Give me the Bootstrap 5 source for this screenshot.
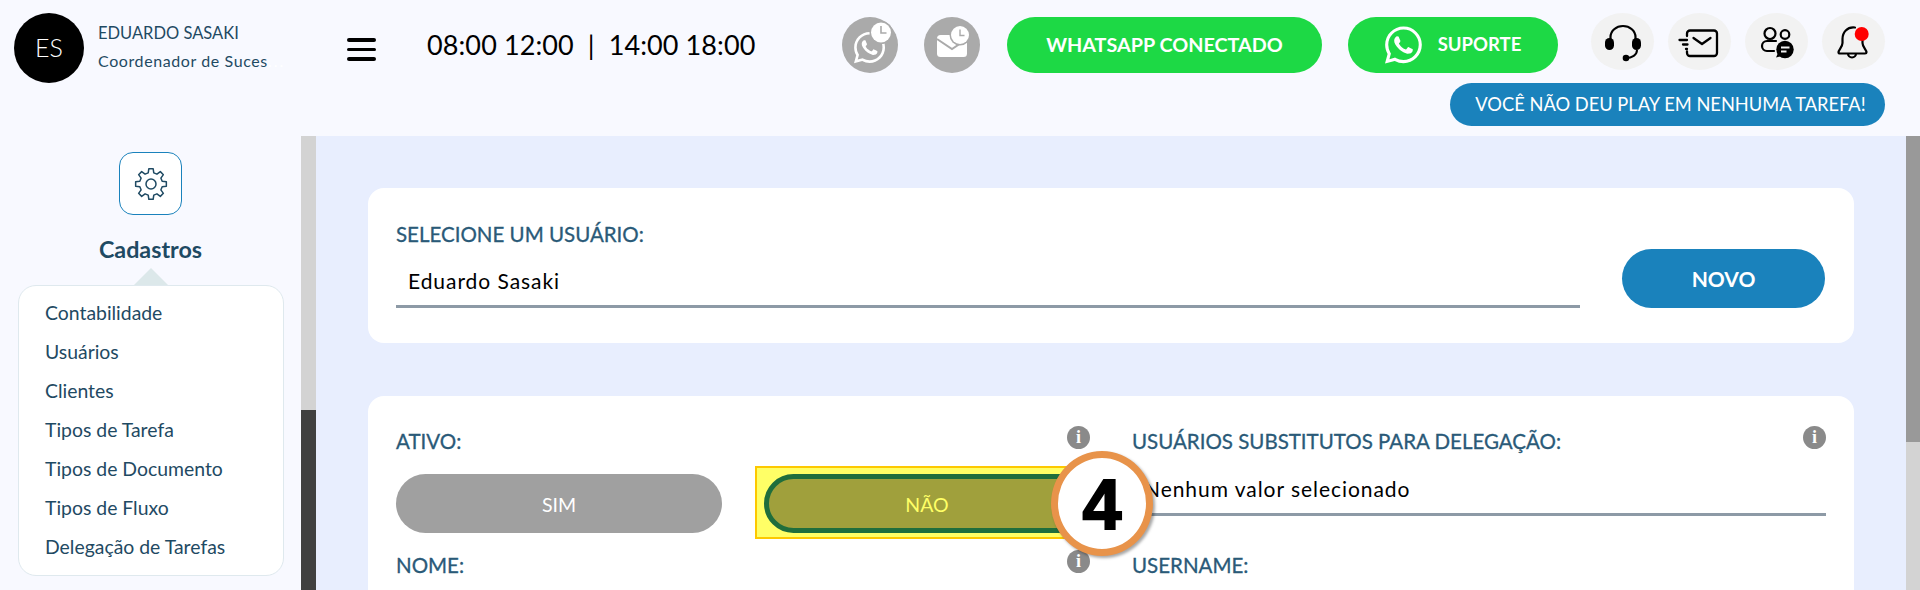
<!DOCTYPE html>
<html lang="pt-BR">
<head>
<meta charset="utf-8">
<title>Cadastros</title>
<link href="https://cdn.jsdelivr.net/npm/bootstrap@5.3.0/dist/css/bootstrap.min.css" rel="stylesheet">
<style>
html,body{height:590px;overflow:hidden}
body{background:#f8f9ff;font-family:"Lato","Noto Sans",sans-serif;color:#000}
.app-head{height:136px;padding:13px 35px 0 14px}
.avatar-ring{width:70px;height:70px;background:#000;color:#fff;font-size:25px;font-weight:300;flex:none}
.who{width:195px;margin-left:14px;padding-top:7px;font-size:16.5px;line-height:27px;color:#1f4a63;white-space:nowrap;overflow:hidden}
.who-sub{font-size:16px;letter-spacing:.6px}
.who-dots{color:#fff;letter-spacing:2px}
.burger{width:29px;margin:25px 0 0 54px;flex:none}
.burger i{display:block;height:3.5px;background:#000;border-radius:2px;margin-bottom:6px}
.clock-text{margin:14px 0 0 51px;font-size:27px;letter-spacing:.1px;line-height:36px;white-space:nowrap}
.top-row{gap:26px}
.gray-round{width:56px;height:56px;background:#aaa;margin-top:4px;flex:none}
.gray-last{margin-right:1px}
.pill-green{height:56px;margin-top:4px;background:#1dd945;color:#fff;font-size:19.8px;font-weight:700;border-radius:28px;flex:none;white-space:nowrap}
.pill-wa{width:315px}
.pill-sup{width:210px;gap:16px;font-size:18.500px}
.round-tools{gap:14px;margin-left:7px}
.round-tool{width:63px;height:57px;background:#f2f2f2;flex:none}
.play-pill{width:435px;height:43px;margin-top:10px;padding-left:6px;background:#1a82bc;color:#fff;font-size:18.3px;border-radius:22px;white-space:nowrap}
.app-body{height:454px}
.side{width:301px;flex:none;padding-top:16px}
.gear-box{width:63px;height:63px;border:1.5px solid #1a82bc;border-radius:14px;background:#fff}
.side-title{margin-top:19px;font-size:23.3px;line-height:30px;font-weight:700;color:#1f4a63;text-align:center}
.side-arrow{width:0;height:0;border-left:17px solid transparent;border-right:17px solid transparent;border-bottom:17px solid #dce8ea;margin-top:4px}
.side-menu{margin:0 17px 0 18px;height:291px;padding:7px 0 0 26px;background:#fff;border:1px solid #dfe9ee;border-radius:18px;list-style:none}
.side-menu li{height:39px;line-height:39px;font-size:19.4px;color:#1f4a63;white-space:nowrap}
.bar-left{width:15px;flex:none;background:linear-gradient(#d3d3d3 274px,#404040 274px)}
.bar-right{width:14px;flex:none;background:linear-gradient(#999 306px,#d3d3d3 306px)}
.work{background:#e8eefe;padding:52px 52px 0;overflow:hidden;min-width:0}
.sheet{background:#fff;border-radius:16px;padding:0 28px}
.sheet-top{height:155px;margin-bottom:53px;gap:42px}
.field-name{font-size:20.5px;line-height:24px;color:#2a5a78;white-space:nowrap;-webkit-text-stroke:.3px #2a5a78}
.pick-wrap{padding-top:34px}
.pick-text{font-size:21px;letter-spacing:.95px;color:#000;white-space:nowrap;border-bottom:3px solid #8d9aa6}
.pick-main{height:54px;margin-top:8px;padding:9px 0 0 12px;line-height:36px}
.pick-sub{height:42px;padding:0 0 0 12px;line-height:30px}
.btn-novo{width:203px;height:59px;margin:61px 1px 0 0;background:#1a82bc;color:#fff;font-size:21px;font-weight:700;border-radius:30px;flex:none}
.sheet-form{height:400px;padding-top:30px}
.form-cols{display:grid;grid-template-columns:694px 694px;column-gap:42px}
.field-head{height:28px}
.field-head .field-name{padding-top:3px}
.info-dot{width:23px;height:23px;background:#8a8a8a;color:#fff;font:700 18px/23px "Liberation Serif",serif;text-align:center;flex:none}
.field-body{height:59px;margin:20px 0 17px}
.choice{gap:42px}
.choice-btn{width:326px;height:59px;padding-top:2px;border-radius:30px;font-size:19.500px;flex:none}
.choice-yes{background:#a0a0a0;color:#fff}
.choice-no{background:#a0a03c;color:#ffff66;border:5px solid #1f6e3c}
.spot{margin:-8px -9px -6px;padding:7px 8px 5px;background:#ffff66;border:1px solid #fdc800;outline:1px solid #fdc800;outline-offset:-2px;flex:none}
.step-badge{left:683px;top:55px;width:102px;height:105px;padding-top:3px;background:#fff;border:7px solid #e8934a;box-shadow:2px 2px 3px rgba(0,0,0,.35);font:700 70px/1 "Liberation Sans",sans-serif;color:#000;z-index:5;-webkit-text-stroke:2px #000}
</style>
</head>
<body>
<header class="app-head d-flex align-items-start">
  <div class="avatar-ring rounded-circle d-flex align-items-center justify-content-center">ES</div>
  <div class="who"><div>EDUARDO SASAKI</div><div class="who-sub">Coordenador de Suces<span class="who-dots">...</span></div></div>
  <div class="burger"><i></i><i></i><i></i></div>
  <div class="clock-text">08:00 12:00 &nbsp;|&nbsp; 14:00 18:00</div>
  <div class="ms-auto">
    <div class="top-row d-flex align-items-start">
      <div class="gray-round rounded-circle">
        <svg width="56" height="56" viewBox="0 0 56 56"><g transform="translate(12 15) scale(1.95)"><path fill="#fff" d="M13.601 2.326A7.854 7.854 0 0 0 7.994 0C3.627 0 .068 3.558.064 7.926c0 1.399.366 2.76 1.057 3.965L0 16l4.204-1.102a7.933 7.933 0 0 0 3.79.965h.004c4.368 0 7.926-3.558 7.93-7.93A7.898 7.898 0 0 0 13.6 2.326zM7.994 14.521a6.573 6.573 0 0 1-3.356-.92l-.24-.144-2.494.654.666-2.433-.156-.251a6.56 6.56 0 0 1-1.007-3.505c0-3.626 2.957-6.584 6.591-6.584a6.56 6.56 0 0 1 4.66 1.931 6.557 6.557 0 0 1 1.928 4.66c-.004 3.639-2.961 6.592-6.592 6.592zm3.615-4.934c-.197-.099-1.17-.578-1.353-.646-.182-.065-.315-.099-.445.099-.133.197-.513.646-.627.775-.114.133-.232.148-.43.05-.197-.1-.836-.308-1.592-.985-.59-.525-.985-1.175-1.103-1.372-.114-.198-.011-.304.088-.403.087-.088.197-.232.296-.346.1-.114.133-.198.198-.33.065-.134.034-.248-.015-.347-.05-.099-.445-1.076-.612-1.47-.16-.389-.323-.335-.445-.34-.114-.007-.247-.007-.38-.007a.729.729 0 0 0-.529.247c-.182.198-.691.677-.691 1.654 0 .977.71 1.916.81 2.049.098.133 1.394 2.132 3.383 2.992.47.205.84.326 1.129.418.475.152.904.129 1.246.08.38-.058 1.171-.48 1.338-.943.164-.464.164-.86.114-.943-.049-.084-.182-.133-.38-.232z"/></g><circle cx="39" cy="15.500" r="11.500" fill="#aaa"/><circle cx="39" cy="15.500" r="10" fill="#fff"/><path d="M39 9v7h5.500" fill="none" stroke="#aaa" stroke-width="1.600"/></svg>
      </div>
      <div class="gray-round gray-last rounded-circle">
        <svg width="56" height="56" viewBox="0 0 56 56"><rect x="13" y="18" width="30" height="22" rx="3.500" fill="#fff"/><path d="M13 22l15 10 15-10" fill="none" stroke="#aaa" stroke-width="2"/><circle cx="36" cy="18" r="10.500" fill="#aaa"/><circle cx="36" cy="18" r="9" fill="#fff"/><path d="M36 12.500v6h4.500" fill="none" stroke="#aaa" stroke-width="1.400"/></svg>
      </div>
      <div class="pill-green pill-wa d-flex align-items-center justify-content-center">WHATSAPP CONECTADO</div>
      <div class="pill-green pill-sup d-flex align-items-center justify-content-center">
        <svg width="37" height="38" viewBox="0 0 16 16"><path fill="#fff" d="M13.601 2.326A7.854 7.854 0 0 0 7.994 0C3.627 0 .068 3.558.064 7.926c0 1.399.366 2.76 1.057 3.965L0 16l4.204-1.102a7.933 7.933 0 0 0 3.79.965h.004c4.368 0 7.926-3.558 7.93-7.93A7.898 7.898 0 0 0 13.6 2.326zM7.994 14.521a6.573 6.573 0 0 1-3.356-.92l-.24-.144-2.494.654.666-2.433-.156-.251a6.56 6.56 0 0 1-1.007-3.505c0-3.626 2.957-6.584 6.591-6.584a6.56 6.56 0 0 1 4.66 1.931 6.557 6.557 0 0 1 1.928 4.66c-.004 3.639-2.961 6.592-6.592 6.592zm3.615-4.934c-.197-.099-1.17-.578-1.353-.646-.182-.065-.315-.099-.445.099-.133.197-.513.646-.627.775-.114.133-.232.148-.43.05-.197-.1-.836-.308-1.592-.985-.59-.525-.985-1.175-1.103-1.372-.114-.198-.011-.304.088-.403.087-.088.197-.232.296-.346.1-.114.133-.198.198-.33.065-.134.034-.248-.015-.347-.05-.099-.445-1.076-.612-1.47-.16-.389-.323-.335-.445-.34-.114-.007-.247-.007-.38-.007a.729.729 0 0 0-.529.247c-.182.198-.691.677-.691 1.654 0 .977.71 1.916.81 2.049.098.133 1.394 2.132 3.383 2.992.47.205.84.326 1.129.418.475.152.904.129 1.246.08.38-.058 1.171-.48 1.338-.943.164-.464.164-.86.114-.943-.049-.084-.182-.133-.38-.232z"/></svg>
        <span>SUPORTE</span>
      </div>
      <div class="round-tools d-flex">
        <div class="round-tool rounded-circle">
          <svg width="63" height="57" viewBox="0 0 63 57"><path d="M19.500 27v-3a12.500 11 0 0 1 25 0v3" fill="none" stroke="#000" stroke-width="2.200"/><rect x="14" y="25" width="9" height="12" rx="4.500"/><rect x="41" y="25" width="9" height="12" rx="4.500"/><path d="M46 37c0 5-5 8-11 8" fill="none" stroke="#000" stroke-width="2"/><circle cx="35" cy="45" r="3.300"/></svg>
        </div>
        <div class="round-tool rounded-circle">
          <svg width="63" height="57" viewBox="0 0 63 57" fill="none" stroke="#000" stroke-width="2.300" stroke-linecap="round" stroke-linejoin="round"><path d="M19 23v-2.500a3 3 0 0 1 3-3h24a3 3 0 0 1 3 3v19.500a3 3 0 0 1-3 3h-24a3 3 0 0 1-3-3v-1.500"/><path d="M25.500 25l8.500 6 8.500-6"/><path d="M11.500 27h7.500M15 31.500h4.500M18 36h1"/></svg>
        </div>
        <div class="round-tool rounded-circle">
          <svg width="63" height="57" viewBox="0 0 63 57"><g fill="none" stroke="#000" stroke-width="2.200" stroke-linecap="round"><circle cx="25" cy="20.500" r="5.500"/><circle cx="40" cy="21.500" r="4.300"/><path d="M31 28h-9a5 5 0 0 0 0 10h7"/></g><circle cx="40" cy="36.500" r="8.700"/><path d="M33 40l-2 4.500 6-1.500z"/><path d="M36 34.500h8.500M36 38.500h5.500" stroke="#f2f2f2" stroke-width="2"/></svg>
        </div>
        <div class="round-tool rounded-circle">
          <svg width="63" height="57" viewBox="0 0 63 57"><path d="M33 14.500c-8-1-12.500 5-12.500 11.500v4c0 4-4 7-4 9.300 0 .8.500 1.200 1.500 1.200h25c1 0 1.500-.4 1.500-1.200 0-2.300-4-5.300-4-9.300v-3M26 40.500a4 4 0 0 0 8 0" fill="none" stroke="#000" stroke-width="2.200" stroke-linecap="round"/><circle cx="39.700" cy="21" r="7" fill="#f00"/></svg>
        </div>
      </div>
    </div>
    <div class="d-flex justify-content-end">
      <div class="play-pill d-flex align-items-center justify-content-center">VOCÊ NÃO DEU PLAY EM NENHUMA TAREFA!</div>
    </div>
  </div>
</header>
<div class="app-body d-flex">
  <aside class="side">
    <div class="gear-box mx-auto d-flex align-items-center justify-content-center">
      <svg width="34" height="34" viewBox="-17 -17 34 34" fill="none" stroke="#1f4a63" stroke-width="1.500" stroke-linejoin="round"><path d="M11.160-2.780L15.350-2.160 15.350 2.160 11.160 2.780 9.860 5.920 12.380 9.330 9.330 12.380 5.920 9.860 2.780 11.160 2.160 15.350-2.160 15.350-2.780 11.160-5.920 9.860-9.330 12.380-12.380 9.330-9.860 5.920-11.160 2.780-15.350 2.160-15.350-2.160-11.160-2.780-9.860-5.920-12.380-9.330-9.330-12.380-5.920-9.860-2.780-11.160-2.160-15.350 2.160-15.350 2.780-11.160 5.920-9.860 9.330-12.380 12.380-9.330 9.860-5.920z"/><circle r="5"/></svg>
    </div>
    <div class="side-title">Cadastros</div>
    <div class="side-arrow mx-auto"></div>
    <ul class="side-menu">
      <li>Contabilidade</li>
      <li>Usuários</li>
      <li>Clientes</li>
      <li>Tipos de Tarefa</li>
      <li>Tipos de Documento</li>
      <li>Tipos de Fluxo</li>
      <li>Delegação de Tarefas</li>
    </ul>
  </aside>
  <div class="bar-left"></div>
  <main class="work flex-grow-1">
    <section class="sheet sheet-top d-flex">
      <div class="pick-wrap flex-grow-1">
        <div class="field-name">SELECIONE UM USUÁRIO:</div>
        <div class="pick-text pick-main">Eduardo Sasaki</div>
      </div>
      <div class="btn-novo d-flex align-items-center justify-content-center">NOVO</div>
    </section>
    <section class="sheet sheet-form position-relative">
      <div class="form-cols">
        <div>
          <div class="field-head d-flex justify-content-between align-items-start"><div class="field-name">ATIVO:</div><div class="info-dot rounded-circle">i</div></div>
          <div class="field-body choice d-flex">
            <div class="choice-btn choice-yes d-flex align-items-center justify-content-center">SIM</div>
            <div class="spot"><div class="choice-btn choice-no d-flex align-items-center justify-content-center">NÃO</div></div>
          </div>
        </div>
        <div>
          <div class="field-head d-flex justify-content-between align-items-start"><div class="field-name">USUÁRIOS SUBSTITUTOS PARA DELEGAÇÃO:</div><div class="info-dot rounded-circle">i</div></div>
          <div class="field-body"><div class="pick-text pick-sub">Nenhum valor selecionado</div></div>
        </div>
        <div>
          <div class="field-head d-flex justify-content-between align-items-start"><div class="field-name">NOME:</div><div class="info-dot rounded-circle">i</div></div>
        </div>
        <div>
          <div class="field-head d-flex justify-content-between align-items-start"><div class="field-name">USERNAME:</div></div>
        </div>
      </div>
      <div class="step-badge position-absolute rounded-circle d-flex align-items-center justify-content-center">4</div>
    </section>
  </main>
  <div class="bar-right"></div>
</div>
<script src="https://cdn.jsdelivr.net/npm/bootstrap@5.3.0/dist/js/bootstrap.bundle.min.js"></script>
</body>
</html>
